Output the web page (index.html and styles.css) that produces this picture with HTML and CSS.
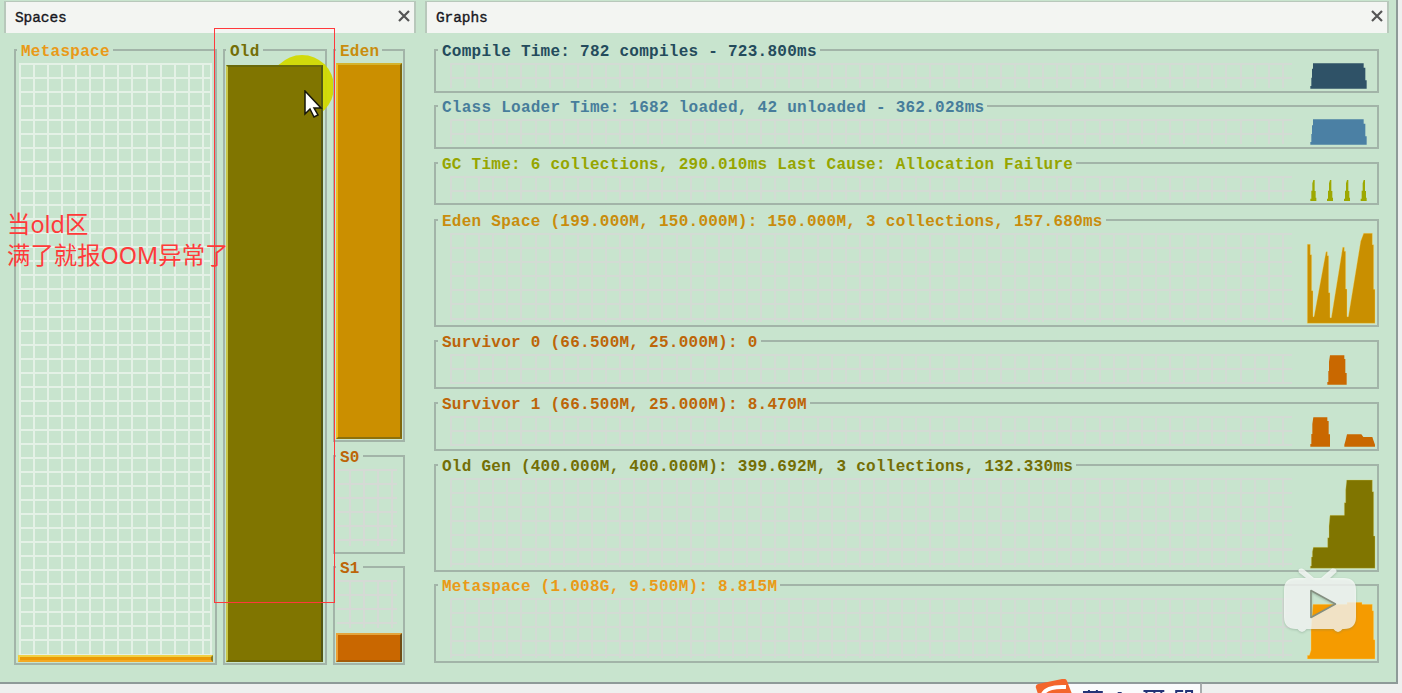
FILE: index.html
```html
<!DOCTYPE html>
<html lang="zh">
<head>
<meta charset="utf-8">
<title>Visual GC</title>
<link rel="stylesheet" href="styles.css">
</head>
<body>
<main class="window">
  <section class="panel spaces">
    <header class="tab"><span>Spaces</span><svg class="close" viewBox="0 0 12 12"><path d="M1 1L11 11M11 1L1 11"/></svg></header>
    <div class="space-columns">
      <div class="group meta-space"><span class="legend c-meta">Metaspace</span><div class="white-grid"></div><div class="fill f-meta"></div></div>
      <div class="group old-space"><span class="legend c-old">Old</span><i class="spot"></i><div class="fill f-old"></div></div>
      <div class="young">
        <div class="group eden-space"><span class="legend c-eden">Eden</span><div class="fill f-eden"></div></div>
        <div class="group s0-space"><span class="legend c-surv">S0</span><div class="small-grid"></div></div>
        <div class="group s1-space"><span class="legend c-surv">S1</span><div class="small-grid"></div><div class="fill f-surv"></div></div>
      </div>
    </div>
  </section>
  <section class="panel graphs">
    <header class="tab"><span>Graphs</span><svg class="close" viewBox="0 0 12 12"><path d="M1 1L11 11M11 1L1 11"/></svg></header>
    <div class="graph-list">
      <div class="group graph g-compile"><span class="legend c-compile">Compile Time: 782 compiles - 723.800ms</span><div class="grid"></div>
        <svg class="chart" viewBox="168 153 243 120"><path fill="#2f5267" d="M211 266V258H214V233H216V206H219V190H371V203H376V241H380V266Z"/></svg></div>
      <div class="group graph g-loader"><span class="legend c-loader">Class Loader Time: 1682 loaded, 42 unloaded - 362.028ms</span><div class="grid"></div>
        <svg class="chart" viewBox="168 321 243 120"><path fill="#4b80a4" d="M211 434V426H214V402H216V376H219V358H371V371H376V409H380V434Z"/></svg></div>
      <div class="group graph g-gc"><span class="legend c-gc">GC Time: 6 collections, 290.010ms Last Cause: Allocation Failure</span><div class="grid"></div>
        <svg class="chart" viewBox="168 492 243 117"><g fill="#9da800"><path id="spike" d="M211 603V596H214V572H217V550L220 540H224V573H227V593H229V603Z"/><use href="#spike" x="50"/><use href="#spike" x="101"/><use href="#spike" x="151"/></g></svg></div>
      <div class="group graph g-eden"><span class="legend c-eden">Eden Space (199.000M, 150.000M): 150.000M, 3 collections, 157.680ms</span><div class="grid"></div>
        <svg class="chart" viewBox="168 33 243 312"><path fill="#c98f00" stroke="#ffdc62" stroke-width="1" d="M202 340V103H211V134H215V242H219V320H222L258 125H262V137H266V248H270V323H274L308 112H313V124H317V237H321V320H325L362 94L371 70H397V104H401V238H405V340Z"/></svg></div>
      <div class="group graph g-s0"><span class="legend c-surv">Survivor 0 (66.500M, 25.000M): 0</span><div class="grid"></div>
        <svg class="chart" viewBox="168 396 243 135"><path fill="#c96800" d="M262 524V516H265V483H267V455L270 436H313V447H316V489H320V524Z"/></svg></div>
      <div class="group graph g-s1"><span class="legend c-surv">Survivor 1 (66.500M, 25.000M): 8.470M</span><div class="grid"></div>
        <svg class="chart" viewBox="168 582 243 135"><path fill="#c96800" d="M211 710V702H214V672H217V642L220 622H262V633H266V673H270V710ZM313 710V704L317 690L321 673H364L370 681H397L401 693L405 704V710Z"/></svg></div>
      <div class="group graph g-old"><span class="legend c-old">Old Gen (400.000M, 400.000M): 399.692M, 3 collections, 132.330ms</span><div class="grid"></div>
        <svg class="chart" viewBox="168 45 243 312"><path fill="#807500" stroke="#d8d56a" stroke-width="1" d="M211 352V345H214V318H217V302L220 289H263V260H267V225L270 193H313V155H317V117L320 87H397V122H401V255H405V352Z"/></svg></div>
      <div class="group graph g-meta"><span class="legend c-meta">Metaspace (1.008G, 9.500M): 8.815M</span><div class="grid"></div>
        <svg class="chart" viewBox="168 408 243 225"><path fill="#f59b00" stroke="#ffe27c" stroke-width="1" d="M202 627V616H208L213 600V540L219 463H321V457H366V463H397V482H401V569H405V627Z"/></svg></div>
    </div>
  </section>
</main>
<div class="ime"><svg class="ime-icons" viewBox="0 0 120 4"><path fill="#253477" d="M2 1H7V0H9V1H15V0H17V1H22V3H17V4H15V3H9V4H7V3H2ZM37 2H41V4H37ZM63 0H84V2H82V4H80V2H75V4H73V2H67V4H65V2H63ZM95 0H103V2H97V4H95ZM105 0H113V4H111V2H107V4H105Z"/></svg></div>
<svg class="ime-logo" viewBox="0 0 38 15"><path fill="#f3662c" d="M1 9Q0 6 3 5L27 0Q31-1 32 2L37 15H3Z"/><path d="M8 15Q12 7 31 8" fill="none" stroke="#fff" stroke-width="4"/></svg>
<div class="marker"></div>
<p class="note">当old区<br>满了就报OOM异常了</p>
<svg class="cursor" viewBox="0 0 20 29"><path d="M2 1V24L7 19L11 27L15 25L11 18H18Z"/></svg>
<svg class="player" viewBox="0 0 80 68">
  <path fill="#fff" fill-opacity=".74" fill-rule="evenodd" d="M15 10H25L18 4.500Q16 0 21 .5L23 1.500L33 10H40L51 .5Q56 0 55.500 4L49 10H63Q75 10 75 22V49Q75 61 63 61H61.500Q57 67 52.500 61H25.500Q21 67 16.500 61H15Q3 61 3 49V22Q3 10 15 10ZM29 22V50L55 36Z"/>
  <path d="M30 22.500V49.500L54.500 36Z" fill="none" stroke="#858f80" stroke-width="1.500" stroke-linejoin="round"/>
</svg>
</body>
</html>
```
FILE: styles.css
```css
* { box-sizing: border-box; }
body { margin: 0; width: 1402px; height: 693px; overflow: hidden; position: relative; background: #eef0ef; }
svg { display: block; }

.window { display: flex; gap: 9px; width: 1398px; height: 684px; padding: 1px 7px 0 4px; background: #c8e4ce; border-right: 2px solid #8e9a98; border-bottom: 2px solid #8e9a98; }
.spaces { width: 412px; }
.graphs { width: 964px; }
.tab { display: flex; justify-content: space-between; align-items: center; height: 32px; padding: 0 4px 0 9px; background: #f3f5f2; border: solid #b8c8bb; border-width: 1px 2px 0; font: 14.5px/18px "Liberation Mono", monospace; letter-spacing: -.1px; color: #171721; -webkit-text-stroke: .35px #171721; }
.tab span { padding-top: 1px; }
.close { width: 12px; height: 12px; margin-top: -3px; fill: none; stroke: #555; stroke-width: 2.2; }

.group { position: relative; border: 2px solid #a2b4a8; }
.legend { position: absolute; z-index: 2; left: 2px; top: -8px; padding: 0 3px 0 4px; background: #c8e4ce; font: bold 16px/18px "Liberation Mono", monospace; letter-spacing: .26px; white-space: pre; }
.c-meta { color: #e99a18; }
.c-old { color: #746e05; }
.c-eden { color: #c98c0c; }
.c-surv { color: #bd6508; }
.c-compile { color: #244b5c; }
.c-loader { color: #477d9b; }
.c-gc { color: #96a500; }

.space-columns { display: flex; gap: 6px; padding: 16px 0 0 10px; }
.space-columns .group { display: flex; flex-direction: column; justify-content: flex-end; }
.space-columns .legend { left: 1px; }
.meta-space { width: 203px; height: 616px; padding: 0 2px 1px; }
.old-space { width: 104px; height: 616px; padding: 0 2px 1px 1px; }
.young { display: flex; flex-direction: column; width: 72px; }
.young .group { padding: 0 1px 1px 1px; }
.eden-space { height: 393px; }
.s0-space { height: 99px; margin-top: 13px; }
.s1-space { height: 99px; margin-top: 12px; }
.fill { position: relative; border: 2px solid; }
.f-meta { height: 7px; background: #eb9b06; border-color: #f0d044 #8a7b20 #f4a923 #f5ce3a; }
.f-old { height: 597px; background: #807500; border-color: #69690b #525713 #6e670a #c9c74b; }
.f-eden { height: 376px; background: #cb8f00; border-color: #d4b32e #80670b #8c710c #f0bd25; }
.f-surv { height: 29px; background: #c96700; border-color: #e4a43c #704c13 #a55b08 #eda035; }
.white-grid { height: 592px; margin: 0 1px 0 1px; border-right: 2px solid #e4f1e6; background: repeating-linear-gradient(90deg, #e4f1e6 0 2px, transparent 2px 14.06px), repeating-linear-gradient(#e4f1e6 0 2px, transparent 2px 14.06px); }
.small-grid { flex: 1; margin: 12px 5px 5px 1px; background: repeating-linear-gradient(90deg, transparent 0 12px, #d5dad5 12px 14px), repeating-linear-gradient(#d5dad5 0 2px, transparent 2px 14px); }
.spot { position: absolute; left: 45px; top: 4px; width: 64px; height: 64px; border-radius: 50%; background: #d2d900; opacity: .95; }

.graph-list { padding: 16px 10px 0 9px; }
.graph { display: flex; justify-content: flex-end; }
.grid { flex: 1; margin: 12px 4px 3px 14px; background: repeating-linear-gradient(90deg, #d3dbd4 0 2px, transparent 2px 14.1px), repeating-linear-gradient(#d3dbd4 0 2px, transparent 2px 14.1px); }
.chart { width: 81px; height: 100%; flex: none; }
.g-compile { height: 44px; }
.g-loader { height: 44px; margin-top: 12px; }
.g-gc { height: 43px; margin-top: 13px; }
.g-eden { height: 108px; margin-top: 14px; }
.g-s0 { height: 49px; margin-top: 13px; }
.g-s1 { height: 49px; margin-top: 13px; }
.g-old { height: 108px; margin-top: 13px; }
.g-meta { height: 79px; margin-top: 12px; }

/* floating annotations and overlays */
.marker { position: absolute; z-index: 4; left: 214px; top: 28px; width: 121px; height: 575px; border: 1px solid #ff393c; }
.note { position: absolute; z-index: 4; left: 7px; top: 209px; margin: 0; font: 23.4px/31px "Noto Sans", "Noto Sans CJK SC", sans-serif; color: #ff3a3a; white-space: nowrap; }
.cursor { position: absolute; z-index: 5; left: 303px; top: 90px; width: 20px; height: 29px; fill: #fff; stroke: #16160b; stroke-width: 1.5; }
.player { position: absolute; z-index: 5; left: 1281px; top: 568px; width: 80px; height: 68px; filter: drop-shadow(0 1px 1px #5f7b6870); }
.ime { position: absolute; left: 1050px; top: 683px; width: 152px; height: 10px; padding: 6px 0 0 31px; background: #fbfbfc; border-top: 1px solid #929a9d; border-right: 2px solid #a8acad; }
.ime-icons { width: 119px; height: 4px; }
.ime-logo { position: absolute; z-index: 2; left: 1035px; top: 679px; width: 38px; height: 15px; }
```
